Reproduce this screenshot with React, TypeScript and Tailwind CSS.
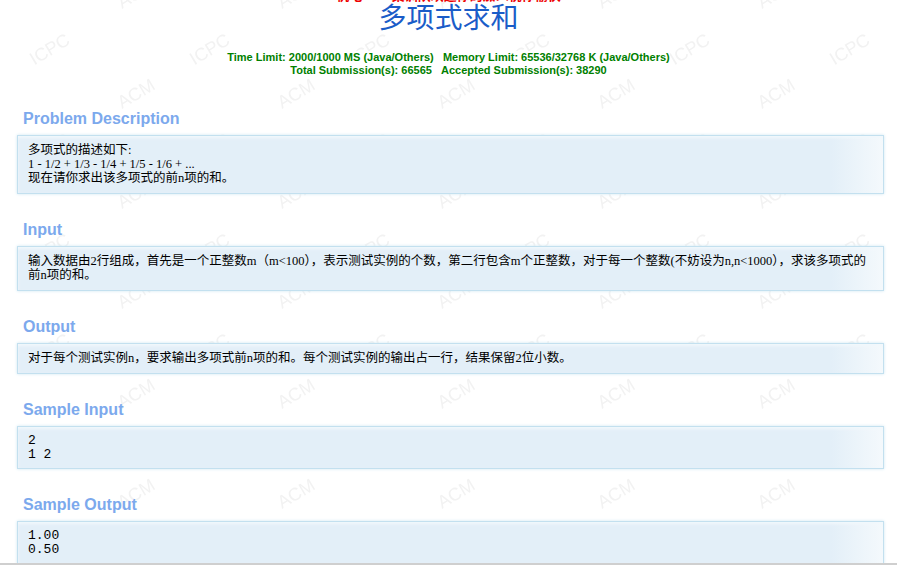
import React from "react";

const sans = { fontFamily: '"Liberation Sans", Arial, "Noto Sans CJK SC", sans-serif' };

function Watermark() {
  return (
    <svg className="pointer-events-none absolute inset-0 h-full w-full" aria-hidden="true">
      <defs>
        <pattern id="wm" x="92" y="22" width="160" height="100" patternUnits="userSpaceOnUse">
          <g
            transform="translate(80,50) rotate(-31)"
            fill="#f2f2f2"
            fontFamily="Liberation Sans, Arial, sans-serif"
            fontSize="18"
            textAnchor="middle"
          >
            <text x="-42" y="6">ACM</text>
            <text x="44" y="6">ICPC</text>
          </g>
        </pattern>
      </defs>
      <rect width="100%" height="100%" fill="url(#wm)" />
    </svg>
  );
}

function Section({
  title,
  children,
  mono,
}: {
  title: string;
  children: React.ReactNode;
  mono?: boolean;
}) {
  return (
    <div className="mb-[26px]">
      <div
        className="pl-[6px] text-[16px] font-bold leading-[20px] text-[#7CA9ED]"
        style={sans}
      >
        {title}
      </div>
      <div
        className={
          "mt-[6px] border border-[#c3e0ef] bg-[linear-gradient(to_right,#e3eff8_0%,#e3eff8_94%,#f4f9fc_100%)] pl-[10px] pr-[8px] pt-[7px] text-black shadow-[inset_0_2px_3px_#f2f8fc,0_0_3px_#cfe6f2] " +
          (mono ? "pb-[6px] text-[13px] leading-[14px]" : "pb-[8px] text-[12.5px] leading-[14px]")
        }
        style={{
          fontFamily: mono
            ? '"Liberation Mono", "Courier New", monospace'
            : '"Liberation Serif", "Times New Roman", "Noto Sans CJK SC", serif',
        }}
      >
        {children}
      </div>
    </div>
  );
}

export default function App() {
  return (
    <div className="relative min-h-screen overflow-hidden bg-white">
      <Watermark />
      <div className="relative">
        <div
          className="-mt-[9px] h-[10px] overflow-visible text-center text-[13px] font-bold leading-[10px] text-[#ee0000]"
          style={sans}
        >
          杭电ACM集训队欢迎你的加入祝你愉快
        </div>
        <div
          className="text-center text-[28px] leading-[30px] text-[#1A5CC8]"
          style={{ fontFamily: '"Noto Sans CJK SC", sans-serif' }}
        >
          多项式求和
        </div>
        <div
          className="mx-auto mt-[20px] w-fit bg-white text-center text-[11px] font-bold leading-[13px] text-[#008000]"
          style={sans}
        >
          <div>
            Time Limit: 2000/1000 MS (Java/Others)&nbsp;&nbsp;&nbsp;Memory Limit: 65536/32768 K
            (Java/Others)
          </div>
          <div>
            Total Submission(s): 66565&nbsp;&nbsp;&nbsp;Accepted Submission(s): 38290
          </div>
        </div>

        <div className="mt-[32px] pl-[17px] pr-[13px]">
          <Section title="Problem Description">
            <div>多项式的描述如下:</div>
            <div>1 - 1/2 + 1/3 - 1/4 + 1/5 - 1/6 + ...</div>
            <div>现在请你求出该多项式的前n项的和。</div>
          </Section>
          <Section title="Input">
            输入数据由2行组成，首先是一个正整数m（m&lt;100），表示测试实例的个数，第二行包含m个正整数，对于每一个整数(不妨设为n,n&lt;1000），求该多项式的前n项的和。
          </Section>
          <Section title="Output">
            对于每个测试实例n，要求输出多项式前n项的和。每个测试实例的输出占一行，结果保留2位小数。
          </Section>
          <Section title="Sample Input" mono>
            <div>2</div>
            <div>1 2</div>
          </Section>
          <Section title="Sample Output" mono>
            <div>1.00</div>
            <div>0.50</div>
          </Section>
        </div>
      </div>
      <div className="fixed bottom-0 left-0 right-0 h-[2px] bg-[#cfcfcf]" />
    </div>
  );
}
